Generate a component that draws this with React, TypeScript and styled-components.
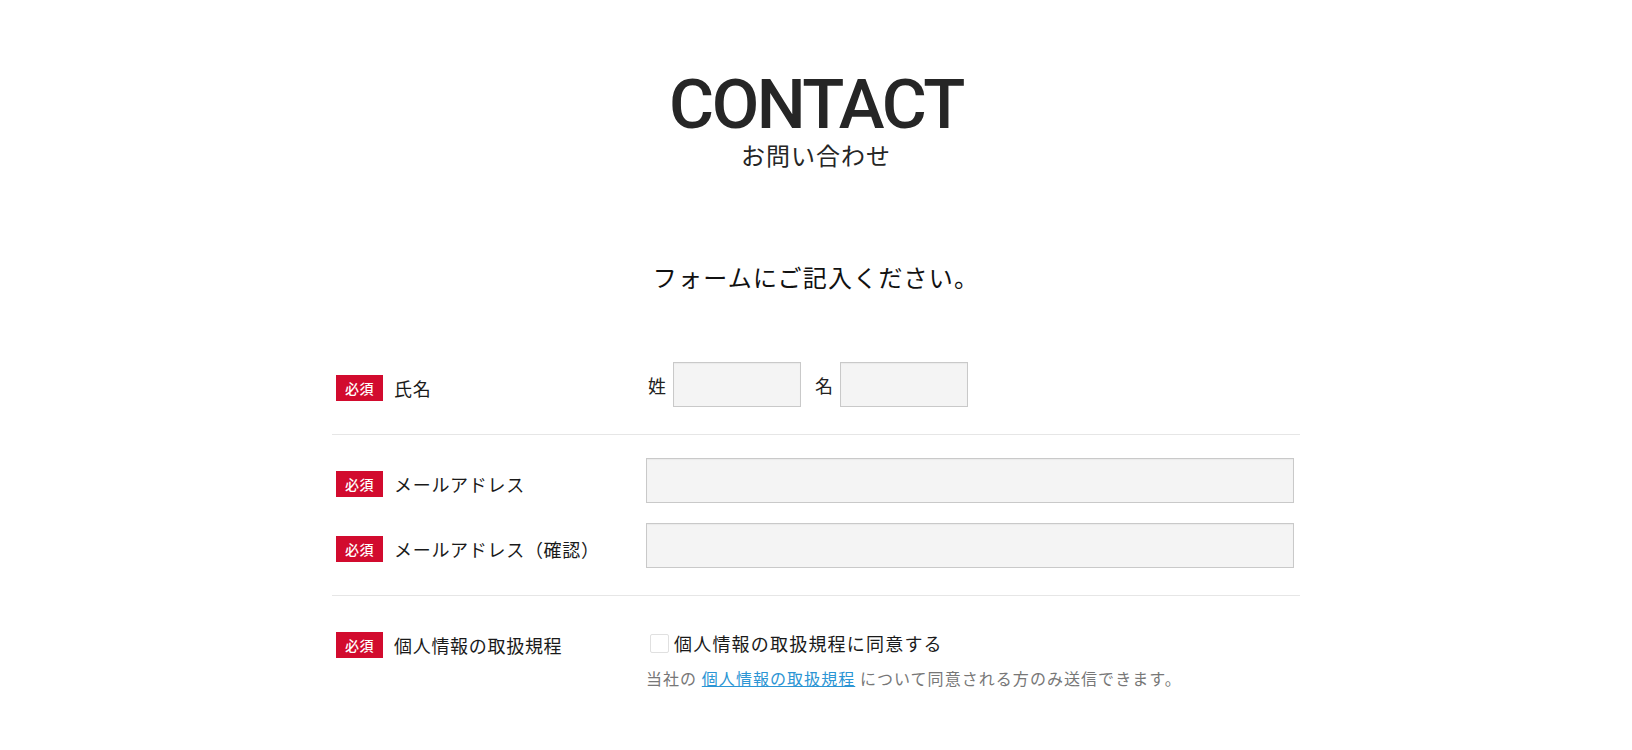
import { FC } from 'react';
import styled, { createGlobalStyle } from 'styled-components';

const GlobalStyle = createGlobalStyle`
  body {
    margin: 0;
    background: #fff;
    color: #222;
    font-family: 'Noto Sans CJK JP', 'Noto Sans', sans-serif;
  }
`;

interface IFieldRow {
  label: string;
  kind: 'name' | 'text' | 'agree';
}

const sections: IFieldRow[][] = [
  [{ label: '氏名', kind: 'name' }],
  [
    { label: 'メールアドレス', kind: 'text' },
    { label: 'メールアドレス（確認）', kind: 'text' },
  ],
  [{ label: '個人情報の取扱規程', kind: 'agree' }],
];

const renderField = (kind: IFieldRow['kind']) => {
  if (kind === 'name') {
    return (
      <NameField>
        <NamePart>
          <SmallLabel>姓</SmallLabel>
          <NameInput type="text" />
        </NamePart>
        <NamePart>
          <SmallLabel>名</SmallLabel>
          <NameInput type="text" />
        </NamePart>
      </NameField>
    );
  }

  if (kind === 'agree') {
    return (
      <AgreeField>
        <AgreeLine>
          <CheckBox type="checkbox" />
          <span>個人情報の取扱規程に同意する</span>
        </AgreeLine>
        <Note>
          当社の <NoteLink href="#">個人情報の取扱規程</NoteLink> について同意される方のみ送信できます。
        </Note>
      </AgreeField>
    );
  }

  return <TextInput type="text" />;
};

const App: FC = () => {
  return (
    <>
      <GlobalStyle />
      <Page>
        <Header>
          <Title>CONTACT</Title>
          <SubTitle>お問い合わせ</SubTitle>
        </Header>

        <Lead>フォームにご記入ください。</Lead>

        <Form>
          {sections.map((rows, i) => (
            <Section key={i}>
              {rows.map(row => (
                <Row key={row.label}>
                  <LabelCell>
                    <Required>必須</Required>
                    <LabelText>{row.label}</LabelText>
                  </LabelCell>
                  <FieldCell>{renderField(row.kind)}</FieldCell>
                </Row>
              ))}
            </Section>
          ))}
        </Form>
      </Page>
    </>
  );
};

export default App;

const Page = styled.div`
  padding-top: 74px;
`;

const Header = styled.header`
  text-align: center;
`;

const Title = styled.h1`
  margin: 0;
  font-family: Roboto, 'Liberation Sans', sans-serif;
  font-weight: 500;
  font-size: 69px;
  line-height: 62px;
  letter-spacing: -2.4px;
  color: #262626;
`;

const SubTitle = styled.p`
  margin: 7px 0 0;
  font-size: 24px;
  line-height: 24px;
  letter-spacing: 1px;
  color: #262626;
`;

const Lead = styled.p`
  margin: 92px 0 0;
  text-align: center;
  font-size: 24px;
  line-height: 36px;
  letter-spacing: 1.2px;
  color: #111;
`;

const Form = styled.form`
  width: 968px;
  margin: 44px auto 0;
`;

const Section = styled.div`
  display: flex;
  flex-direction: column;
  gap: 20px;
  padding: 23px 6px 27px 4px;
  border-bottom: 1px solid #e6e6e6;

  &:last-child {
    border-bottom: none;
  }
`;

const Row = styled.div`
  display: grid;
  grid-template-columns: 310px 1fr;
`;

const LabelCell = styled.div`
  display: flex;
  align-items: center;
  height: 26px;
  margin-top: 13px;
`;

const Required = styled.span`
  display: inline-flex;
  align-items: center;
  justify-content: center;
  width: 47px;
  height: 26px;
  margin-right: 11px;
  background: #d20b2e;
  color: #fff;
  font-size: 14px;
  font-weight: 500;
  letter-spacing: 0.5px;
`;

const LabelText = styled.span`
  font-size: 18px;
  letter-spacing: 0.7px;
  color: #1a1a1a;
`;

const FieldCell = styled.div`
  min-width: 0;
`;

const NameField = styled.div`
  display: flex;
  align-items: center;
  gap: 12px;
`;

const NamePart = styled.div`
  display: flex;
  align-items: center;
  gap: 7px;
`;

const SmallLabel = styled.span`
  font-size: 18px;
  line-height: 1;
  padding-left: 2px;
`;

const inputBase = `
  box-sizing: border-box;
  height: 45px;
  margin: 0;
  border: 1px solid #c9c9c9;
  background: #f4f4f4;
  box-shadow: inset 0 1px 1px rgba(0, 0, 0, 0.04);
  font-size: 16px;
  outline: none;
`;

const NameInput = styled.input`
  ${inputBase}
  width: 128px;
`;

const TextInput = styled.input`
  ${inputBase}
  display: block;
  width: 100%;
`;

const AgreeField = styled.div`
  padding-top: 11px;
`;

const AgreeLine = styled.label`
  display: flex;
  align-items: center;
  height: 26px;
  font-size: 18px;
  letter-spacing: 1.2px;
  color: #1a1a1a;
`;

const CheckBox = styled.input`
  appearance: none;
  box-sizing: border-box;
  width: 19px;
  height: 19px;
  margin: 0 5px 0 4px;
  border: 1px solid #e0e0e0;
  border-radius: 2px;
  background: #fff;
`;

const Note = styled.p`
  margin: 9px 0 0;
  font-size: 16px;
  line-height: 26px;
  letter-spacing: 1.05px;
  color: #777;
`;

const NoteLink = styled.a`
  color: #2b95d4;
  text-decoration: underline;
`;
